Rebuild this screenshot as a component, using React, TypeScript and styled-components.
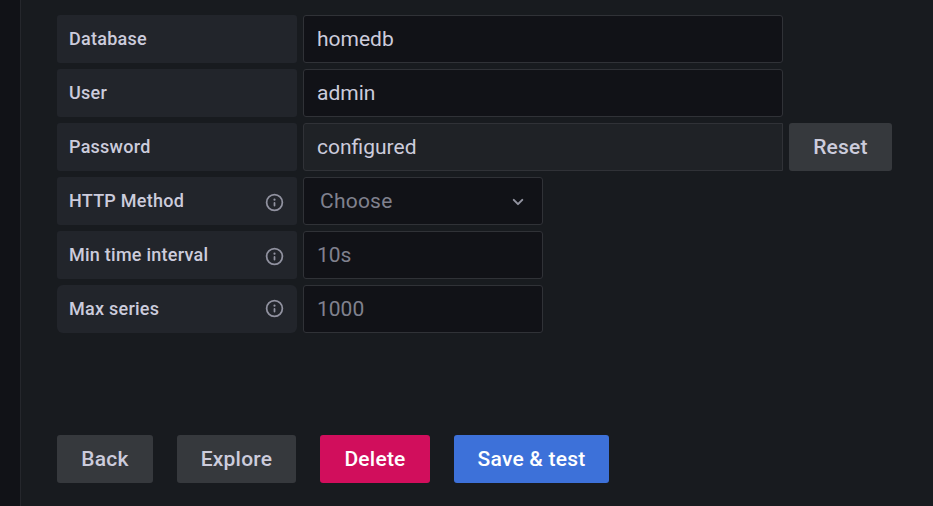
import React from "react";
import styled, { createGlobalStyle } from "styled-components";

const GlobalStyle = createGlobalStyle`
  *, *::before, *::after { box-sizing: border-box; }
  body {
    margin: 0;
    background: #111217;
    color: #ccccdc;
    font-family: Roboto, "Liberation Sans", sans-serif;
    font-size: 21px;
    line-height: 33px;
    letter-spacing: 0.225px;
    overflow: hidden;
  }
`;

const Page = styled.div`
  display: flex;
  height: 506px;
`;

const SideBar = styled.div`
  width: 21px;
  flex: none;
  border-right: 1px solid #25272c;
  background: #111217;
`;

const Content = styled.main`
  flex: 1;
  padding: 15px 36px 0;
  background: #181b1f;
`;

const Form = styled.form`
  display: flex;
  flex-direction: column;
  gap: 102px;
`;

const Fields = styled.div`
  display: flex;
  flex-direction: column;
  gap: 6px;
`;

const Row = styled.div`
  display: flex;
  gap: 6px;
  height: 48px;
`;

const Label = styled.label<{ $rounded?: boolean }>`
  display: flex;
  align-items: center;
  justify-content: space-between;
  width: 240px;
  padding: 0 12px 2px;
  border-radius: ${(p) => (p.$rounded ? 6 : 3)}px;
  background: #22252b;
  font-size: 18px;
  font-weight: 500;
  letter-spacing: 0.25px;
`;

const LabelIcon = styled.span<{ $drop: number }>`
  display: flex;
  margin-top: ${(p) => p.$drop}px;
  color: #9192a0;
`;

const Input = styled.input<{ $width: number }>`
  width: ${(p) => p.$width}px;
  height: 48px;
  padding: 0 13px;
  border: 1px solid #303237;
  border-radius: 3px;
  outline: none;
  background: #111217;
  color: #ccccdc;
  font: inherit;
  letter-spacing: normal;
  &::placeholder { color: #80818e; opacity: 1; }
  &:disabled {
    border-radius: 3px 0 0 3px;
    background: #1f2226;
  }
`;

const Select = styled.div`
  display: flex;
  align-items: center;
  justify-content: space-between;
  width: 240px;
  padding: 0 12px 0 16px;
  border: 1px solid #303237;
  border-radius: 3px;
  background: #111217;
  color: #80818e;
  svg { margin-top: 2px; }
`;

const Actions = styled.div`
  display: flex;
  gap: 24px;
`;

const tones = {
  secondary: ["#36393d", "#ccccdc"],
  destructive: ["#d10e5c", "#ffffff"],
  primary: ["#3d71d9", "#ffffff"],
};

const Button = styled.button<{ $tone: keyof typeof tones; $width: number }>`
  width: ${(p) => p.$width}px;
  height: 48px;
  padding: 0;
  border: 0;
  border-radius: 3px;
  background: ${(p) => tones[p.$tone][0]};
  color: ${(p) => tones[p.$tone][1]};
  font: inherit;
  font-weight: 500;
  letter-spacing: 0.225px;
  white-space: nowrap;
`;

const InfoIcon = ({ drop = 5 }: { drop?: number }) => (
  <LabelIcon $drop={drop}>
    <svg width="21" height="21" viewBox="0 0 24 24" fill="currentColor">
      <path d="M12,2A10,10,0,1,0,22,12,10.01114,10.01114,0,0,0,12,2Zm0,18a8,8,0,1,1,8-8A8.00917,8.00917,0,0,1,12,20Zm0-8.5a1,1,0,0,0-1,1v3a1,1,0,0,0,2,0v-3A1,1,0,0,0,12,11.5Zm0-4a1.25,1.25,0,1,0,1.25,1.25A1.25,1.25,0,0,0,12,7.5Z" />
    </svg>
  </LabelIcon>
);

const AngleDown = () => (
  <svg width="24" height="24" viewBox="0 0 24 24" fill="#9293a0">
    <path d="M17,9.17a1,1,0,0,0-1.41,0L12,12.71,8.46,9.17a1,1,0,0,0-1.41,0,1,1,0,0,0,0,1.42l4.24,4.24a1,1,0,0,0,1.42,0L17,10.59A1,1,0,0,0,17,9.17Z" />
  </svg>
);

export default function App() {
  return (
    <>
      <GlobalStyle />
      <Page>
        <SideBar />
        <Content>
          <Form>
            <Fields>
              <Row>
                <Label>Database</Label>
                <Input $width={480} defaultValue="homedb" spellCheck={false} />
              </Row>
              <Row>
                <Label>User</Label>
                <Input $width={480} defaultValue="admin" />
              </Row>
              <Row>
                <Label>Password</Label>
                <Input $width={480} defaultValue="configured" disabled />
                <Button type="button" $tone="secondary" $width={103}>Reset</Button>
              </Row>
              <Row>
                <Label>HTTP Method<InfoIcon /></Label>
                <Select>Choose<AngleDown /></Select>
              </Row>
              <Row>
                <Label>Min time interval<InfoIcon /></Label>
                <Input $width={240} placeholder="10s" />
              </Row>
              <Row>
                <Label $rounded>Max series<InfoIcon drop={0} /></Label>
                <Input $width={240} placeholder="1000" />
              </Row>
            </Fields>
            <Actions>
              <Button type="button" $tone="secondary" $width={96}>Back</Button>
              <Button type="button" $tone="secondary" $width={119}>Explore</Button>
              <Button type="button" $tone="destructive" $width={110}>Delete</Button>
              <Button type="button" $tone="primary" $width={155}>Save &amp; test</Button>
            </Actions>
          </Form>
        </Content>
      </Page>
    </>
  );
}
